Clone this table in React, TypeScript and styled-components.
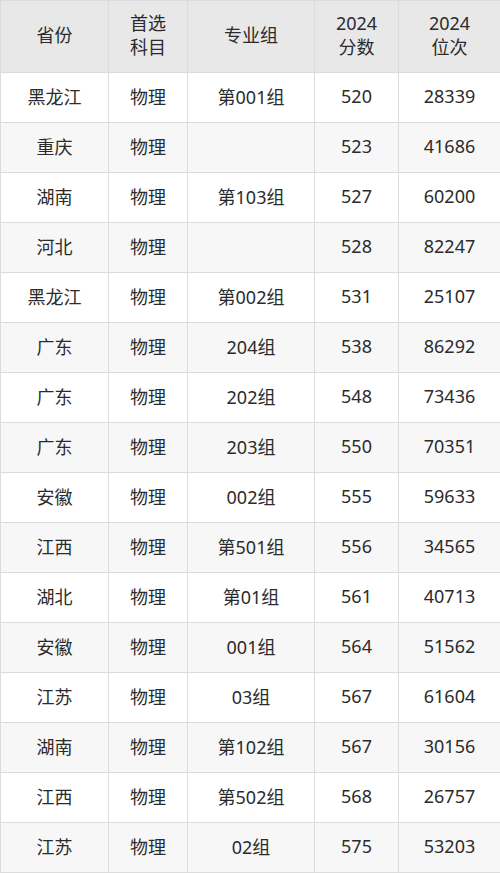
import styled, { createGlobalStyle } from 'styled-components'

const Global = createGlobalStyle`
  html, body { margin: 0; padding: 0; background: #fff; }
  body { font-family: "Noto Sans", "Noto Sans CJK SC", sans-serif; }
`

const Table = styled.table`
  width: 500px;
  border-collapse: collapse;
  table-layout: fixed;
  color: #2b2b2b;
  font-size: 18px;
`
const Col = styled.col<{ $w: number }>`
  width: ${({ $w }) => $w}px;
`
const Head = styled.th`
  height: 67px;
  background: #e8e8e8;
  font-weight: 400;
  line-height: 24px;
  border: 1px solid #dcdcdc;
  text-align: center;
  padding: 0 0 4px;
`
const Row = styled.tr<{ $alt: boolean }>`
  background: ${({ $alt }) => ($alt ? '#f7f7f7' : '#fff')};
`
const Cell = styled.td`
  height: 46px;
  border: 1px solid #dcdcdc;
  text-align: center;
  padding: 0 0 3px;
`

const widths = [108, 79, 127, 84, 102]

const rows = [
  ['黑龙江', '物理', '第001组', '520', '28339'],
  ['重庆', '物理', '', '523', '41686'],
  ['湖南', '物理', '第103组', '527', '60200'],
  ['河北', '物理', '', '528', '82247'],
  ['黑龙江', '物理', '第002组', '531', '25107'],
  ['广东', '物理', '204组', '538', '86292'],
  ['广东', '物理', '202组', '548', '73436'],
  ['广东', '物理', '203组', '550', '70351'],
  ['安徽', '物理', '002组', '555', '59633'],
  ['江西', '物理', '第501组', '556', '34565'],
  ['湖北', '物理', '第01组', '561', '40713'],
  ['安徽', '物理', '001组', '564', '51562'],
  ['江苏', '物理', '03组', '567', '61604'],
  ['湖南', '物理', '第102组', '567', '30156'],
  ['江西', '物理', '第502组', '568', '26757'],
  ['江苏', '物理', '02组', '575', '53203'],
]

export default function App() {
  return (
    <>
      <Global />
      <Table>
        <colgroup>
          {widths.map((w, i) => <Col key={i} $w={w} />)}
        </colgroup>
        <thead>
          <tr>
            <Head>省份</Head>
            <Head>首选<br />科目</Head>
            <Head>专业组</Head>
            <Head>2024<br />分数</Head>
            <Head>2024<br />位次</Head>
          </tr>
        </thead>
        <tbody>
          {rows.map((r, i) => (
            <Row key={i} $alt={i % 2 === 1}>
              {r.map((c, j) => <Cell key={j}>{c}</Cell>)}
            </Row>
          ))}
        </tbody>
      </Table>
    </>
  )
}
